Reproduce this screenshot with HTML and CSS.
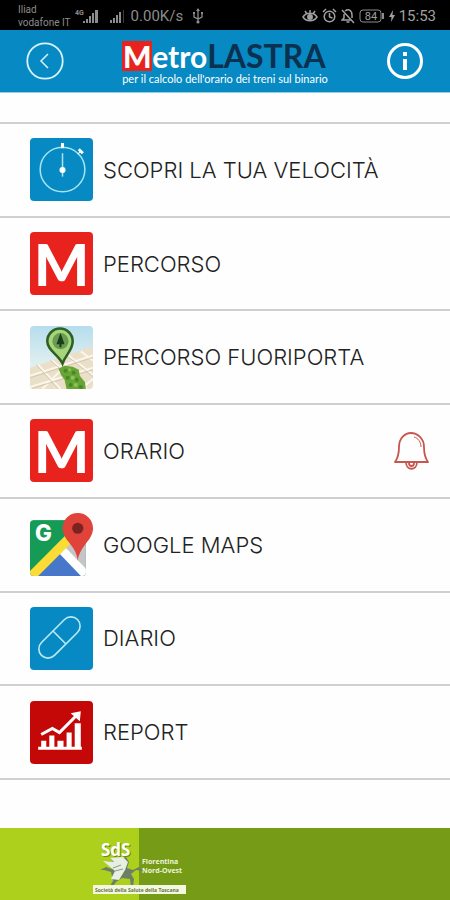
FILE: index.html
```html
<!DOCTYPE html>
<html lang="it">
<head>
    <meta charset="UTF-8">
    <meta name="viewport" content="width=device-width, initial-scale=1.0">
    <title>MetroLASTRA</title>
    <link rel="stylesheet" href="styles.css">
</head>
<body>
<!-- Status bar -->
<div class="status-bar">
    <div class="status-group">
        <div class="carrier">
            <span>Iliad</span>
            <span>vodafone IT</span>
        </div>
        <svg class="signal" width="50" height="20" viewBox="0 -2 50 20" fill="#8c8c8c">
            <text x="0" y="7" font-size="7" font-weight="700">4G</text>
            <path d="M8 13h2v2H8zM11 11h2v4h-2zM14 8h2v7h-2zM17 5h2v10h-2zM20 2h3v13h-3z"/>
            <path d="M35 12h2v3h-2zM38 10h2v5h-2zM41 7h2v8h-2zM44 4h2v11h-2z"/>
            <path d="M48 2h1v13h-1z" fill="#3c3c3c"/>
        </svg>
        <span class="speed">0.00K/s</span>
        <svg width="12" height="16" viewBox="0 0 12 16" fill="none" stroke="#8c8c8c" stroke-width="1.3">
            <path d="M6 2v12M2 6v3l4 2 4-2V5"/>
            <path d="M6 0l2 3H4zM1 4h2v2H1zM9 4h2v2H9z" fill="#8c8c8c" stroke="none"/>
            <circle cx="6" cy="14" r="1.6" fill="#8c8c8c" stroke="none"/>
        </svg>
    </div>
    <div class="status-group">
        <svg width="16" height="16" viewBox="0 0 16 16" fill="none" stroke="#a0a0a0" stroke-width="1.5">
            <path d="M1 9c3-5 11-5 14 0-3 5-11 5-14 0zM8 2v3M3 3l2 3M13 3l-2 3"/>
            <circle cx="8" cy="9" r="2.2" fill="#a0a0a0"/>
        </svg>
        <svg width="15" height="16" viewBox="0 0 15 16" fill="none" stroke="#a0a0a0" stroke-width="1.5">
            <circle cx="7.5" cy="8.5" r="5.3"/>
            <path d="M1 4l3-3M14 4l-3-3M7.5 5v4l3 1"/>
        </svg>
        <svg width="14" height="16" viewBox="0 0 14 16" fill="none" stroke="#a0a0a0" stroke-width="1.5">
            <path d="M1 2l12 13M4 3c4-3 7 0 7 4v3M3 6v4l-2 2h9M5.5 14h3"/>
        </svg>
        <svg width="26" height="14" viewBox="0 0 26 14" fill="none" stroke="#8c8c8c">
            <rect x="1" y="1" width="21" height="12" rx="3"/>
            <path d="M24 4v6" stroke-width="2"/>
            <text x="12" y="11" text-anchor="middle" font-size="11" fill="#a0a0a0" stroke="none">84</text>
        </svg>
        <svg width="6" height="12" viewBox="0 0 6 12" fill="#a0a0a0"><path d="M4 0L0 7h2.5L2 12l4-7H3.5z"/></svg>
        <span class="clock">15:53</span>
    </div>
</div>

<header class="header">
    <button type="button" class="icon-btn" aria-label="Indietro">
        <svg width="38" height="38" viewBox="0 0 38 38" fill="none" stroke="#d8f3fb">
            <circle cx="19" cy="19" r="17.7" stroke-width="1.8"/>
            <path d="M22 12l-7 7 7 7" stroke-width="1.5"/>
        </svg>
    </button>
    <div class="brand">
        <div class="brand-name">
            <span class="brand-m">M</span><span class="brand-metro">etro</span><span class="brand-lastra">LASTRA</span>
        </div>
        <div class="brand-tagline">per il calcolo dell'orario dei treni sul binario</div>
    </div>
    <button type="button" class="icon-btn" aria-label="Informazioni">
        <svg width="38" height="38" viewBox="0 0 38 38" fill="none" stroke="#fff">
            <circle cx="19" cy="19" r="16.5" stroke-width="3"/>
            <path d="M19 10v4M19 17v11" stroke-width="4"/>
        </svg>
    </button>
</header>

<main class="content">
    <nav class="menu">
        <a class="menu-item" href="#velocita">
            <svg class="tile" viewBox="0 0 62 62">
                <rect width="62" height="62" rx="4" fill="#078ac3"/>
                <g fill="none" stroke="#a5e5f2" stroke-width="1.5">
                    <circle cx="32" cy="31" r="22"/>
                    <path d="M32 15v23"/>
                </g>
                <circle cx="32" cy="31.5" r="3" fill="#fff"/>
                <path d="M30.5 5h3v5h-3zM47 12l2-2 4 4-2 2z" fill="#fff"/>
                <path d="M50 13l-3 3" stroke="#fff"/>
            </svg>
            <span class="label">SCOPRI LA TUA VELOCITÀ</span>
        </a>
        <a class="menu-item" href="#percorso">
            <span class="tile tile-metro" aria-hidden="true">M</span>
            <span class="label">PERCORSO</span>
        </a>
        <a class="menu-item" href="#fuoriporta">
            <svg class="tile" viewBox="0 0 62 62">
                <defs>
                    <linearGradient id="sky" x1="0" y1="0" x2="0" y2="1">
                        <stop offset="0" stop-color="#b5dded"/>
                        <stop offset="1" stop-color="#e9f3ef"/>
                    </linearGradient>
                    <clipPath id="mapClip"><rect width="62" height="62" rx="4"/></clipPath>
                </defs>
                <g clip-path="url(#mapClip)">
                    <rect width="62" height="45" fill="url(#sky)"/>
                    <path d="M0 41L62 20V62H0z" fill="#eadfc9"/>
                    <g fill="none" stroke="#fbf6e8" stroke-width="2">
                        <path d="M0 49l62-20M0 60l62-19M8 38l22 24M22 34l34 28M38 29l24 19M50 25l12 9M12 62L30 44M50 62l12-10"/>
                    </g>
                    <g fill="none" stroke="#c9bda5" stroke-width=".7">
                        <path d="M0 51l62-20M0 62l62-19M6 38l22 24M20 34l34 28M36 29l26 21"/>
                    </g>
                    <path d="M28 42l6-3 8 1 6 3 1 6 5 6 1 7H36l-2-9-3-4z" fill="#68a536"/>
                    <g fill="#48882a">
                        <circle cx="35" cy="44" r="2"/><circle cx="43" cy="46" r="2"/><circle cx="37" cy="51" r="2"/>
                        <circle cx="46" cy="53" r="2"/><circle cx="40" cy="58" r="2"/><circle cx="50" cy="60" r="2"/>
                    </g>
                    <g fill="#8cc354">
                        <circle cx="39" cy="43" r="1.5"/><circle cx="42" cy="51" r="2"/><circle cx="45" cy="58" r="2"/>
                    </g>
                </g>
                <path d="M32 37C28 28 17 24 17 15a12.5 12.5 0 0 1 25 0C42 24 35 28 32 37z" fill="#a5d67a" stroke="#2f5f25" stroke-width="2.5"/>
                <circle cx="30" cy="15" r="8" fill="#6b9b52"/>
                <path d="M30 7l4 11h-3v3h-2v-3h-3z" fill="#183f18"/>
            </svg>
            <span class="label">PERCORSO FUORIPORTA</span>
        </a>
        <a class="menu-item" href="#orario">
            <span class="tile tile-metro" aria-hidden="true">M</span>
            <span class="label">ORARIO</span>
            <svg class="bell" width="38" height="40" viewBox="0 0 38 40" fill="none" stroke="#c8564f" stroke-width="1.8" stroke-linejoin="round">
                <path d="M3 31c3-4 4-7 4-15C7 7 13 2 19 2s13 5 13 14c0 8 1 11 4 15z"/>
                <path d="M14 31c0 9 11 9 11 0M17 32c0 4 5 4 5 0"/>
                <path d="M22 6c4 1 7 5 7 10" stroke-width="1"/>
            </svg>
        </a>
        <a class="menu-item" href="#maps">
            <svg class="tile" viewBox="0 0 62 62">
                <defs><clipPath id="gClip"><rect x="0" y="7" width="55" height="55" rx="4"/></clipPath></defs>
                <g clip-path="url(#gClip)">
                    <rect y="7" width="56" height="55" fill="#169b56"/>
                    <path d="M56 7v55H0z" fill="#c5c5c7"/>
                    <path d="M0 62L29 36l26 26z" fill="#4777c9"/>
                    <path d="M27 38l6-6 26 27v6h-6z" fill="#fff"/>
                    <path d="M-3 60L37 20l5 8L5 65z" fill="#fbdc35"/>
                </g>
                <text class="g-letter" x="5" y="28">G</text>
                <path d="M47 47C46 32 32 27 32 15a15 15 0 0 1 30 0C62 27 49 32 47 47z" fill="#df4339"/>
                <circle cx="47" cy="15" r="5.5" fill="#7b2322"/>
            </svg>
            <span class="label">GOOGLE MAPS</span>
        </a>
        <a class="menu-item" href="#diario">
            <svg class="tile" viewBox="0 0 62 62">
                <rect width="62" height="62" rx="4" fill="#078ac3"/>
                <g transform="rotate(-45 29 30)" fill="none" stroke="#b8e9f5" stroke-width="1.6">
                    <rect x="4" y="21" width="50" height="18" rx="9"/>
                    <path d="M29 21v18"/>
                </g>
            </svg>
            <span class="label">DIARIO</span>
        </a>
        <a class="menu-item" href="#report">
            <svg class="tile" viewBox="0 0 62 62">
                <rect width="62" height="62" rx="4" fill="#c40808"/>
                <path d="M8 45h43v3H8zM11 39h5v6h-5zM19 34h5v11h-5zM27 39h6v6h-6zM36 31h5v14h-5zM44 22h6v23h-6z" fill="#fff"/>
                <path d="M11 33l11-6 7 4 16-16" fill="none" stroke="#fff" stroke-width="3"/>
                <path d="M40 12l10-2-1 10z" fill="#fff"/>
            </svg>
            <span class="label">REPORT</span>
        </a>
    </nav>
</main>

<footer class="footer">
    <svg class="sds-logo" width="96" height="64" viewBox="0 -4 96 64">
        <text class="sds-shadow" x="9" y="17">SdS</text>
        <text class="sds" x="8" y="16">SdS</text>
        <text class="sds-area" x="49" y="24">Fiorentina</text>
        <text class="sds-area" x="49" y="33">Nord-Ovest</text>
        <path d="M7 30l6-3 6 2 3-2-4-4-5-2 7 1-3-4 8 2 8-3 3 5-2 6 6 2 6-3 4 4-7-1-5 4 3 5-1 8h-2l-1-8-8-1-6 4-5 7h-3l5-8-2-9-7-2z" fill="#6d8067"/>
        <path d="M10 21l11 1-4-4 13-1 5 5-3 8-6 10-8-1 4-8z" fill="#e7eee2"/>
        <path d="M20 28l8-3M22 31l8-2" stroke="#8b9981"/>
        <rect y="45" width="93" height="9" fill="#f3f8df"/>
        <text class="sds-strip" x="2" y="52">Società della Salute della Toscana</text>
    </svg>
</footer>
</body>
</html>
```

FILE: styles.css
```css
* {
    margin: 0;
    padding: 0;
    box-sizing: border-box;
}

body {
    font-family: Inter, 'Liberation Sans', sans-serif;
    background: #fefefe;
    min-height: 100vh;
    display: flex;
    flex-direction: column;
}

/* Status bar */
.status-bar {
    height: 30px;
    background: #000;
    color: #8c8c8c;
    font-family: Roboto, sans-serif;
    display: flex;
    justify-content: space-between;
    align-items: center;
    padding: 2px 14px 0 18px;
}

.status-group {
    display: flex;
    align-items: center;
    gap: 4px;
}

.carrier {
    display: flex;
    flex-direction: column;
    font-size: 10px;
    line-height: 13px;
}

.signal {
    margin-right: 2px;
}

.speed {
    font-size: 15px;
    margin-right: 5px;
}

.clock {
    font-size: 15px;
    color: #a0a0a0;
}

/* Header */
.header {
    height: 63px;
    background: #078ac3;
    border-bottom: 1px solid #8fd0e6;
    display: flex;
    justify-content: space-between;
    align-items: center;
    padding: 0 26px;
}

.icon-btn {
    background: none;
    border: none;
    cursor: pointer;
}

.icon-btn svg {
    display: block;
}

.brand {
    font-family: Lato, sans-serif;
    color: #fff;
    padding-top: 4px;
}

.brand-name {
    display: flex;
    align-items: flex-end;
    line-height: 30px;
}

.brand-m {
    background: #e8231e;
    width: 30px;
    text-align: center;
    font-size: 30px;
    font-weight: 900;
}

.brand-metro {
    font-size: 30px;
    font-weight: 700;
}

.brand-lastra {
    font-size: 32px;
    font-weight: 700;
    color: #0b3150;
}

.brand-tagline {
    font-size: 11px;
    line-height: 14px;
    margin-top: 1px;
    white-space: nowrap;
}

/* Menu */
.content {
    flex: 1;
    display: flex;
    padding: 29px 0 48px;
}

.menu {
    flex: 1;
    display: grid;
    grid-auto-rows: 1fr;
    border-top: 2px solid #cfcfcf;
}

.menu-item {
    display: flex;
    align-items: center;
    gap: 10px;
    padding: 14px 20px 14px 30px;
    border-bottom: 2px solid #cfcfcf;
    color: #222;
    text-decoration: none;
}

.tile {
    width: 63px;
    height: 63px;
    flex-shrink: 0;
}

.tile-metro {
    background: #e8231e;
    border-radius: 4px;
    color: #fff;
    font-family: Lato, sans-serif;
    font-size: 58px;
    font-weight: 900;
    line-height: 63px;
    text-align: center;
}

.label {
    font-size: 22px;
    font-weight: 300;
    line-height: 28px;
}

.bell {
    margin-left: auto;
}

.g-letter {
    font-size: 22px;
    font-weight: 800;
    fill: #fff;
}

/* Footer */
.footer {
    height: 72px;
    background: linear-gradient(90deg, #acd01c 139px, #759b17 139px);
    padding: 8px 0 0 93px;
}

.sds-logo {
    display: block;
    font-family: 'Open Sans', sans-serif;
    font-weight: 700;
}

.sds,
.sds-shadow {
    font-size: 17px;
    fill: #fff;
}

.sds-shadow {
    fill: #6b8c12;
}

.sds-area {
    font-size: 7px;
    fill: #edf5d8;
}

.sds-strip {
    font-size: 5px;
    fill: #66734a;
}
```
